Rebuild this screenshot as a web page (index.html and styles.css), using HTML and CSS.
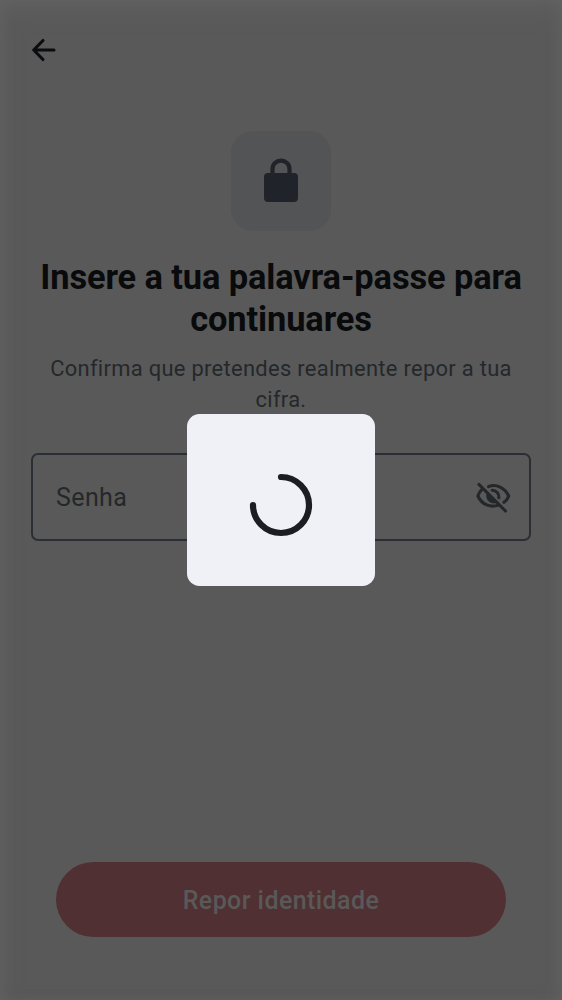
FILE: index.html
```html
<!DOCTYPE html>
<html lang="pt">
<head>
<meta charset="utf-8">
<title>Repor identidade</title>
<link rel="stylesheet" href="styles.css">
</head>
<body>
<main class="screen">
  <header class="topbar">
    <svg class="back" viewBox="0 0 26 24" aria-label="Voltar"><path d="M12 2.500 2.700 12l9.300 9.500M3 12h20"/></svg>
  </header>
  <div class="lock-tile">
    <svg class="lock" viewBox="0 0 34 46"><path class="shackle" d="M8.500 18V11.900a8.500 8.200 0 0 1 17 0V18"/><rect y="16" width="34" height="29" rx="4"/></svg>
  </div>
  <h1 class="title">Insere a tua palavra-passe para continuares</h1>
  <p class="text">Confirma que pretendes realmente repor a tua cifra.</p>
  <div class="field">
    <span class="label">Senha</span>
    <svg class="eye" viewBox="475 480 38 34">
      <path d="M488.500 486.600C496.300 483.300 505 488 508.700 496C507.800 498.600 506 500.800 504 502.300M482 489.500C480 491 478.600 493.500 477.900 496C482 505 490.500 507.800 498.500 505.100"/>
      <path d="M492.300 490.200C496.300 490.400 499.300 493.500 498.900 497.800"/>
      <path class="iris" d="M487.200 491.500 497.900 502.300C493 505.300 486.300 501.800 486.300 496Q486.200 493.500 487.200 491.500Z"/>
      <path d="M478.900 484.300 505.500 511"/>
    </svg>
  </div>
  <button class="action">Repor identidade</button>
</main>
<div class="overlay">
  <div class="dialog" role="dialog" aria-label="A carregar">
    <svg class="spinner" viewBox="0 0 64 64"><path d="M32 4a28 28 0 1 1-28 28"/></svg>
  </div>
</div>
</body>
</html>
```
FILE: styles.css
```css
* { box-sizing: border-box; }
body { margin: 0; font-family: Roboto, "Liberation Sans", sans-serif; }
.screen {
  width: 562px; height: 1000px; padding: 0 31px 62.8px;
  display: flex; flex-direction: column; align-items: center;
  background: #595959;
  box-shadow: inset 0 10px 24px -4px #626262, inset 6px 0 12px -4px #606060, inset -6px 0 12px -4px #606060;
}
.topbar { width: 100%; height: 131px; padding-top: 38px; }
.back { display: block; width: 26px; height: 24px; fill: none; stroke: #0b0c0e; stroke-width: 3.1; stroke-linecap: round; stroke-linejoin: round; }
.lock-tile { width: 100px; height: 100px; flex: none; border-radius: 22px; background: #535456; padding: 26px 33px; }
.lock { display: block; width: 34px; height: 46px; fill: #202329; }
.shackle { fill: none; stroke: #202329; stroke-width: 4.2; }
.title { width: 500px; margin: 25px 0 0; text-align: center; font-size: 34.4px; line-height: 42px; letter-spacing: -.1px; font-weight: 700; color: #090a0c; }
.text { width: 480px; margin: 13px 0 0; text-align: center; font-size: 21.9px; line-height: 31px; letter-spacing: .31px; color: #24282b; }
.field {
  width: 500px; height: 88px; flex: none; margin-top: 38px; padding: 0 16px 0 23px;
  border: 2px solid #2b2f33; border-radius: 7px;
  display: flex; align-items: center; justify-content: space-between;
}
.label { font-size: 25px; letter-spacing: .4px; color: #24282b; }
.eye { width: 38px; height: 34px; fill: none; stroke: #24282b; stroke-width: 3.1; stroke-linecap: round; }
.iris { fill: #24282b; stroke: none; }
.action {
  width: 450px; height: 75px; margin-top: auto; padding: 2px 0 0; border: 0; border-radius: 38px;
  background: #503032; color: #595959; font: 500 25px Roboto, "Liberation Sans", sans-serif; letter-spacing: .42px;
}
.overlay { position: absolute; inset: 0; display: grid; place-items: center; }
.dialog { width: 188px; height: 172px; padding-top: 9px; border-radius: 12.5px; background: #f0f1f6; display: grid; place-items: center; }
.spinner { width: 64px; height: 64px; fill: none; stroke: #1c1d21; stroke-width: 6.2; stroke-linecap: round; }
```
